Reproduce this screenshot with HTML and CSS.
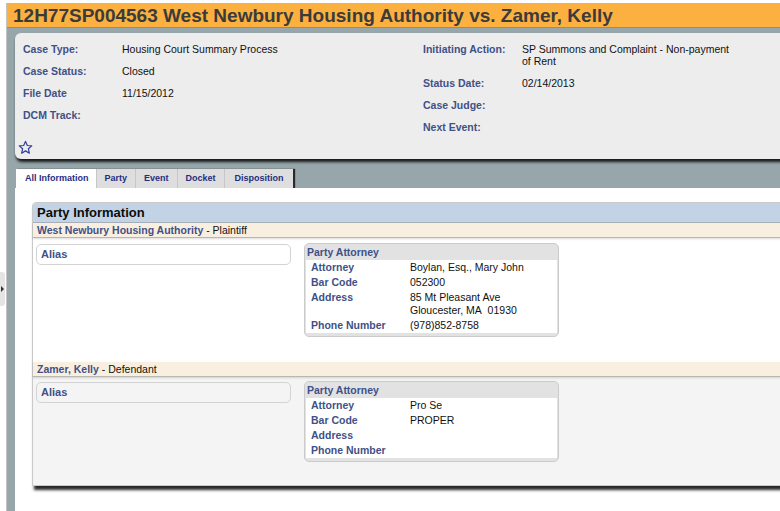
FILE: index.html
```html
<!DOCTYPE html>
<html>
<head>
<meta charset="utf-8">
<link rel="stylesheet" href="styles.css">
</head>
<body>
<div class="app">
  <div class="title-bar">12H77SP004563 West Newbury Housing Authority vs. Zamer, Kelly</div>
  <div class="main">
    <div class="case-card">
      <div class="fields">
        <table class="field-table">
          <tr><th>Case Type:</th><td>Housing Court Summary Process</td></tr>
          <tr><th>Case Status:</th><td>Closed</td></tr>
          <tr><th>File Date</th><td>11/15/2012</td></tr>
          <tr><th>DCM Track:</th><td></td></tr>
        </table>
        <table class="field-table right">
          <tr><th>Initiating Action:</th><td class="wrap">SP Summons and Complaint - Non-payment of Rent</td></tr>
          <tr><th>Status Date:</th><td>02/14/2013</td></tr>
          <tr><th>Case Judge:</th><td></td></tr>
          <tr><th>Next Event:</th><td></td></tr>
        </table>
      </div>
      <div class="star">
        <svg width="15" height="15" viewBox="0 0 24 24"><path d="M12 2.2l2.9 6.6 7.1.6-5.4 4.7 1.6 7-6.2-3.7-6.2 3.7 1.6-7L2 9.4l7.1-.6z" fill="none" stroke="#2d3b9e" stroke-width="1.9" stroke-linejoin="round"/></svg>
      </div>
    </div>

    <div class="tabs">
      <div class="tab active">All Information</div>
      <div class="tab">Party</div>
      <div class="tab">Event</div>
      <div class="tab">Docket</div>
      <div class="tab last">Disposition</div>
    </div>

    <div class="content">
      <div class="panel">
        <div class="panel-head">Party Information</div>

        <div class="party-bar"><span class="party-name">West Newbury Housing Authority</span> - Plaintiff</div>
        <div class="party-body">
          <div class="alias-box">Alias</div>
          <div class="atty-box">
            <div class="atty-head">Party Attorney</div>
            <table class="atty-table">
              <tr><th>Attorney</th><td>Boylan, Esq., Mary John</td></tr>
              <tr><th>Bar Code</th><td>052300</td></tr>
              <tr><th>Address</th><td>85 Mt Pleasant Ave<br>Gloucester, MA&nbsp; 01930</td></tr>
              <tr><th>Phone Number</th><td>(978)852-8758</td></tr>
            </table>
          </div>
        </div>

        <div class="party-bar"><span class="party-name">Zamer, Kelly</span> - Defendant</div>
        <div class="party-body alt">
          <div class="alias-box">Alias</div>
          <div class="atty-box">
            <div class="atty-head">Party Attorney</div>
            <table class="atty-table">
              <tr><th>Attorney</th><td>Pro Se</td></tr>
              <tr><th>Bar Code</th><td>PROPER</td></tr>
              <tr><th>Address</th><td></td></tr>
              <tr><th>Phone Number</th><td></td></tr>
            </table>
          </div>
        </div>
      </div>
    </div>
  </div>
</div>
<div class="side-handle"><span class="side-arrow"></span></div>
</body>
</html>
```

FILE: styles.css
```css
html, body {
  margin: 0;
  padding: 0;
  background: #ffffff;
  overflow: hidden;
  height: 511px;
}
body {
  font-family: "Liberation Sans", Arial, Helvetica, sans-serif;
  font-size: 10.5px;
  color: #111;
}
.app {
  margin: 3px 0 0 6px;
  border-top: 1px solid #b9b9b9;
  border-left: 1px solid #c4c4c4;
  background: #96a6aa;
  height: 507px;
  display: flex;
  flex-direction: column;
}
.title-bar {
  background: #fbb040;
  color: #3b3b3b;
  font-weight: bold;
  font-size: 19px;
  line-height: 23px;
  height: 23px;
  padding-left: 6px;
  white-space: nowrap;
  border-bottom: 1px solid #a08a6a;
}
.main {
  margin-left: 8px;
  flex: 1;
  display: flex;
  flex-direction: column;
}
.case-card {
  margin-top: 5px;
  margin-right: -10px;
  background: #ededed;
  border-radius: 6px 0 0 6px;
  padding: 5px 0 4px 8px;
  box-shadow: 1px 3px 3px rgba(10, 10, 10, 0.9);
}
.fields {
  display: flex;
  align-items: flex-start;
}
.field-table {
  border-collapse: collapse;
  width: 400px;
}
.field-table.right {
  width: auto;
}
.field-table th {
  text-align: left;
  color: #3f5187;
  font-weight: bold;
  width: 99px;
  padding: 5px 0;
  line-height: 12px;
  vertical-align: top;
}
.field-table td {
  padding: 5px 0;
  line-height: 12px;
  vertical-align: top;
  color: #111;
}
.field-table td.wrap {
  width: 212px;
}
.star {
  margin: 2px 0 0 -5px;
  height: 15px;
}
.star svg {
  display: block;
}
.tabs {
  margin-top: 10px;
  margin-left: 1px;
  display: flex;
  align-self: flex-start;
  box-shadow: 2px 0 1px #2a2a2a;
}
.tab {
  background: #dedede;
  color: #1f2e80;
  font-weight: bold;
  font-size: 9px;
  line-height: 19px;
  height: 19px;
  padding: 0 8px 0 8px;
  border-left: 1px solid #c6c6c6;
}
.tab.active {
  background: #ffffff;
  border-left: none;
  padding: 0 7px 0 9px;
}
.tab.last {
  padding: 0 9px 0 10px;
}
.content {
  flex: 1;
  background: #ffffff;
  padding: 14px 0 0 17px;
}
.panel {
  margin-right: -20px;
  border: 1px solid #c9c9c9;
  border-radius: 4px 0 0 0;
  background: #ffffff;
  box-shadow: 1px 5px 3px -1px rgba(15, 15, 15, 0.9);
}
.panel-head {
  background: #c2d3e6;
  font-size: 13px;
  font-weight: bold;
  color: #0c0c0c;
  line-height: 19px;
  height: 19px;
  padding-left: 4px;
  border-bottom: 1px solid #a9b0b8;
  border-radius: 3px 0 0 0;
}
.party-bar {
  background: #f8efe0;
  line-height: 14px;
  height: 14px;
  padding-left: 4px;
  border-bottom: 1px solid #b9b6b0;
  box-shadow: 0 1px 2px rgba(0, 0, 0, 0.15);
  position: relative;
  color: #111;
}
.party-name {
  color: #3f5187;
  font-weight: bold;
}
.party-body {
  display: flex;
  align-items: flex-start;
  padding: 5px 0 25px 3px;
  background: #ffffff;
}
.party-body.alt {
  background: #f4f4f4;
  padding-top: 4px;
  padding-bottom: 23px;
}
.alias-box {
  margin-top: 1px;
  width: 249px;
  height: 19px;
  line-height: 19px;
  padding-left: 4px;
  border: 1px solid #d3d3d3;
  border-radius: 5px;
  font-weight: bold;
  color: #3f5187;
  font-size: 11px;
}
.atty-box {
  margin-left: 13px;
  width: 251px;
  border: 1px solid #cbcbcb;
  border-radius: 5px;
  background: #e2e2e2;
  padding: 0 1px 3px 1px;
}
.atty-head {
  line-height: 16px;
  font-weight: bold;
  color: #3f5187;
  padding-left: 1px;
}
.atty-table {
  width: 100%;
  border-collapse: collapse;
  background: #ffffff;
}
.atty-table th {
  text-align: left;
  color: #3f5187;
  font-weight: bold;
  width: 99px;
  padding: 1px 0 1px 5px;
  line-height: 13px;
  vertical-align: top;
}
.atty-table td {
  padding: 1px 0;
  line-height: 13px;
  vertical-align: top;
  color: #111;
}
.side-handle {
  position: absolute;
  left: 0;
  top: 272px;
  width: 5px;
  height: 34px;
  background: #e4e4e4;
  border-radius: 0 3px 3px 0;
}
.side-arrow {
  position: absolute;
  left: 1px;
  top: 14px;
  width: 0;
  height: 0;
  border-top: 3px solid transparent;
  border-bottom: 3px solid transparent;
  border-left: 3px solid #333;
}
```
